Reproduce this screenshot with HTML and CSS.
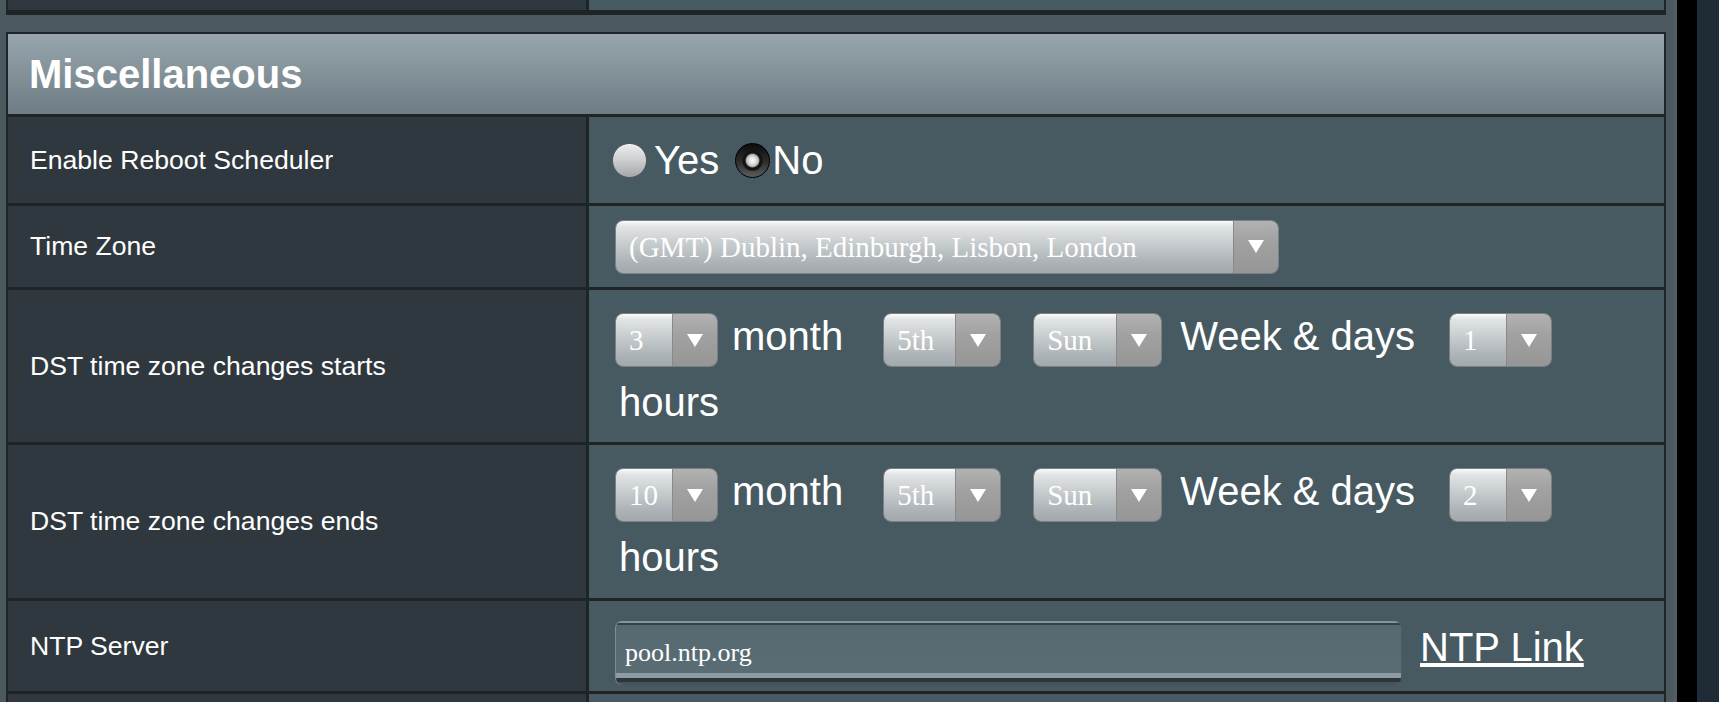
FILE: index.html
```html
<!DOCTYPE html>
<html lang="en">
<head>
<meta charset="utf-8">
<title>Miscellaneous</title>
<link rel="stylesheet" href="styles.css">
</head>
<body>
<div class="page">
  <main class="content">
    <div class="table prev">
      <div class="row row-prev">
        <div class="label"></div>
        <div class="value"></div>
      </div>
    </div>

    <section class="table misc">
      <div class="header">Miscellaneous</div>

      <div class="row row-radio">
        <div class="label">Enable Reboot Scheduler</div>
        <div class="value">
          <input type="radio" class="radio radio-first" name="reboot">
          <span class="radio-text">Yes</span>
          <input type="radio" class="radio radio-second" name="reboot" checked>
          <span class="radio-text radio-text-no">No</span>
        </div>
      </div>

      <div class="row row-select">
        <div class="label">Time Zone</div>
        <div class="value">
          <div class="select w-tz"><span class="select-text">(GMT) Dublin, Edinburgh, Lisbon, London</span><span class="select-arrow"></span></div>
        </div>
      </div>

      <div class="row row-dst">
        <div class="label">DST time zone changes starts</div>
        <div class="value value-dst">
          <div class="select w-num"><span class="select-text">3</span><span class="select-arrow"></span></div>
          <span class="dst-text dst-month">month</span>
          <div class="select w-ord"><span class="select-text">5th</span><span class="select-arrow"></span></div>
          <div class="select w-day"><span class="select-text">Sun</span><span class="select-arrow"></span></div>
          <span class="dst-text dst-week">Week &amp; days</span>
          <div class="select w-num"><span class="select-text">1</span><span class="select-arrow"></span></div>
          <span class="dst-text dst-hours">hours</span>
        </div>
      </div>

      <div class="row row-dst row-dst-end">
        <div class="label">DST time zone changes ends</div>
        <div class="value value-dst">
          <div class="select w-num"><span class="select-text">10</span><span class="select-arrow"></span></div>
          <span class="dst-text dst-month">month</span>
          <div class="select w-ord"><span class="select-text">5th</span><span class="select-arrow"></span></div>
          <div class="select w-day"><span class="select-text">Sun</span><span class="select-arrow"></span></div>
          <span class="dst-text dst-week">Week &amp; days</span>
          <div class="select w-num"><span class="select-text">2</span><span class="select-arrow"></span></div>
          <span class="dst-text dst-hours">hours</span>
        </div>
      </div>

      <div class="row row-ntp">
        <div class="label">NTP Server</div>
        <div class="value value-ntp">
          <input type="text" class="ntp-input" value="pool.ntp.org">
          <a class="ntp-link" href="#">NTP Link</a>
        </div>
      </div>

      <div class="row row-stub">
        <div class="label"></div>
        <div class="value"></div>
      </div>
    </section>
  </main>
  <div class="strip"></div>
  <div class="side"></div>
</div>
</body>
</html>
```

FILE: styles.css
```css
* {
  box-sizing: border-box;
}

html, body {
  margin: 0;
  padding: 0;
}

body {
  background: #1f2b36;
  color: #fff;
  font-family: "Liberation Sans", Arial, sans-serif;
  overflow: hidden;
}

.page {
  display: flex;
  width: 1719px;
  height: 702px;
  overflow: hidden;
}

.content {
  flex: none;
  width: 1677px;
  height: 702px;
  background: #4b585e;
  padding: 0 7px 0 6px;
  border-right: 4px solid #505e64;
}

.strip {
  flex: none;
  width: 20px;
  background: #000;
}

.side {
  flex: 1;
  background: #1f2b36;
}

/* tables */
.table {
  border: 2px solid #1f2427;
}

.prev {
  border-top: none;
  height: 15px;
  display: flex;
}

.row-prev {
  flex: 1;
  border-bottom: none;
}

.misc {
  margin-top: 17px;
  border-bottom: none;
}

.header {
  height: 83px;
  border-bottom: 3px solid #1f2427;
  background: linear-gradient(#97a5ad, #6e7d85);
  font-weight: bold;
  font-size: 40px;
  padding-left: 21px;
  display: flex;
  align-items: center;
}

.row {
  display: flex;
  border-bottom: 3px solid #1f2427;
}

.label {
  flex: none;
  width: 581px;
  background: #2f383e;
  border-right: 3px solid #1f2427;
  display: flex;
  align-items: center;
  padding-left: 22px;
  font-size: 26.6px;
}

.value {
  flex: 1;
  background: #475a61;
  display: flex;
  align-items: center;
  padding: 0 26px;
  font-size: 40px;
}

.row-radio { min-height: 89px; }
.row-select { min-height: 84px; }
.row-ntp { min-height: 93px; }
.row-stub { min-height: 20px; border-bottom: none; }

/* radios */
.radio {
  -webkit-appearance: none;
  appearance: none;
  flex: none;
  width: 35px;
  height: 35px;
  margin: 0;
  border-radius: 50%;
  border: 1px solid #53585c;
  background: linear-gradient(#ededed, #cfd1d2 45%, #a5a8ab);
  box-shadow: inset 0 1px 1px rgba(255, 255, 255, 0.6);
}

.radio:checked {
  border: 1px solid #000;
  background:
    radial-gradient(circle, #fafafa 0, #e6e6e6 3px, #b9b9b9 6px, #141414 7.5px, #141414 9.5px, rgba(20, 20, 20, 0) 11px),
    linear-gradient(#0c0c0c, #2a2a2a 50%, #5c5c5c);
  box-shadow: none;
}

.radio-first {
  margin-left: -3px;
}

.radio-second {
  margin-left: 16px;
}

.radio-text {
  margin-left: 7px;
}

.radio-text-no {
  margin-left: 2px;
}

/* selects */
.select {
  display: inline-flex;
  flex: none;
  height: 54px;
  border: 1px solid #7b8084;
  border-radius: 8px;
  overflow: hidden;
  font-family: "Liberation Serif", "Times New Roman", serif;
  font-size: 29px;
  color: #fff;
}

.select-text {
  flex: 1;
  line-height: 52px;
  padding-left: 13px;
  white-space: nowrap;
  background: linear-gradient(#fbfbfb 0, #e2e5e6 10%, #c6cbce 45%, #acb2b5 80%, #a3a9ad 100%);
}

.select-arrow {
  flex: none;
  width: 45px;
  display: flex;
  align-items: center;
  justify-content: center;
  border-left: 1px solid #8a8989;
  background: linear-gradient(#b3b2b2, #a2a1a1 40%, #979696);
}

.select-arrow::before {
  content: "";
  border-left: 8px solid transparent;
  border-right: 8px solid transparent;
  border-top: 13px solid #fff;
}

.w-tz { width: 664px; }
.w-num { width: 103px; }
.w-ord { width: 118px; }
.w-day { width: 129px; }

/* DST rows */
.value-dst {
  flex-wrap: wrap;
  align-items: baseline;
  align-content: flex-start;
  row-gap: 13px;
  padding-top: 23px;
  padding-bottom: 17px;
}

.row-dst-end .value-dst {
  padding-bottom: 18px;
}

.dst-text {
  white-space: nowrap;
}

.dst-month {
  margin: 0 40px 0 14px;
}

.w-ord {
  margin-right: 32px;
}

.dst-week {
  margin: 0 34px 0 18px;
}

.dst-hours {
  margin-left: 4px;
}

/* NTP */
.value-ntp {
  align-items: baseline;
  padding-top: 20px;
}

.ntp-input {
  flex: none;
  width: 787px;
  height: 64px;
  margin: 0;
  border: 0;
  border-radius: 7px;
  padding: 0 0 0 10px;
  outline: none;
  font-family: "Liberation Serif", "Times New Roman", serif;
  font-size: 26px;
  color: #fff;
  background: linear-gradient(to bottom,
    #84959b 0, #84959b 2px,
    #36424a 2px, #36424a 4px,
    #566970 4px, #5b6d74 52px,
    #8d9ca2 52px, #8d9ca2 57px,
    #2c353a 57px, #2c353a 61px,
    #46545a 61px);
  box-shadow: inset 1px 0 0 #7d8d93, inset -1px 0 0 #4d5b61;
}

.ntp-link {
  margin-left: 18px;
  color: #fff;
  text-decoration: underline;
  font-size: 40px;
}
```
